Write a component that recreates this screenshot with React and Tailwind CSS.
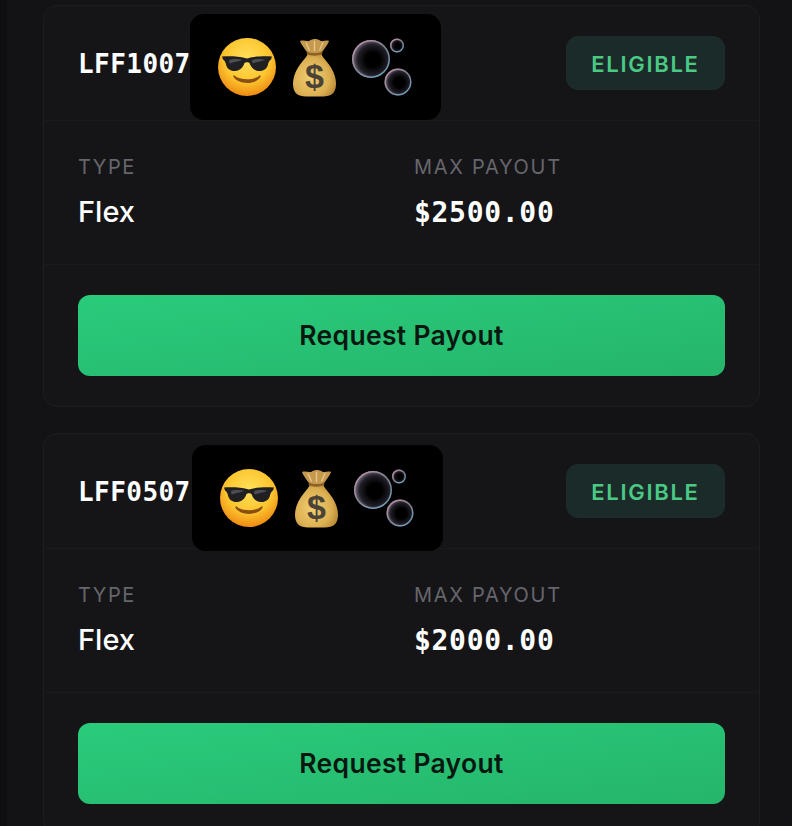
import { useId } from "react";

const MONO = "font-['DejaVu_Sans_Mono','Liberation_Mono',monospace]";

const payouts = [
  { code: "LFF1007", amount: "$2500.00", maskClass: "left-[146px] top-[8px]" },
  { code: "LFF0507", amount: "$2000.00", maskClass: "left-[148px] top-[11px]" },
];

function SunglassesFace() {
  const id = useId();
  return (
    <svg width="58" height="58" viewBox="0 0 58 58">
      <defs>
        <radialGradient id={id} cx="50%" cy="36%" r="64%">
          <stop offset="0%" stopColor="#ffe05a" />
          <stop offset="62%" stopColor="#fcc52f" />
          <stop offset="100%" stopColor="#ee8a12" />
        </radialGradient>
      </defs>
      <circle cx="29" cy="29" r="29" fill={`url(#${id})`} />
      <path d="M4 18.5 C12 18 22 18.4 27 20 C28.2 20.5 29.8 20.5 31 20 C36 18.4 46 18 54 18.5 L53 21.5 C51.5 22.5 50.5 24 50 26.5 C49 31 45.5 33.2 41 33 C36 32.8 33 29.5 31.5 25 C30.5 24 27.5 24 26.5 25 C25 29.5 22 32.8 17 33 C12.5 33.2 9 31 8 26.5 C7.5 24 6.5 22.5 5 21.5 Z" fill="#202022" />
      <path d="M11 22 C14 20.8 21 20.8 24 22 C21 23.4 14.5 24.4 11.5 25.6 Z" fill="#4d4e54" />
      <path d="M34 22 C37 20.8 44 20.8 47 22 C44 23.4 37.5 24.4 34.5 25.6 Z" fill="#4d4e54" />
      <path d="M16.5 37.5 C22 42.5 36 42.5 41.5 37.5 C42.4 37 43 37.8 42.5 38.8 C38 47 20 47 15.5 38.8 C15 37.8 15.6 37 16.5 37.5 Z" fill="#8a4f12" />
    </svg>
  );
}

function MoneyBag() {
  const id = useId();
  return (
    <svg width="43" height="59" viewBox="0 0 43 59">
      <defs>
        <radialGradient id={id} cx="42%" cy="58%" r="70%">
          <stop offset="0%" stopColor="#f0cf73" />
          <stop offset="60%" stopColor="#dcb052" />
          <stop offset="100%" stopColor="#a9772c" />
        </radialGradient>
      </defs>
      <path d="M15 13 C15 17 13 19 9 24 C3 31 0 39 0 46 C0 55 5 58.5 13 58.5 L30 58.5 C38 58.5 43 55 43 46 C43 39 40 31 34 24 C30 19 28 17 28 13 Z" fill={`url(#${id})`} />
      <path d="M7 3 C11 1.5 14 4 17 2.5 C20 0.5 24 0.5 27 2.5 C30 4 33 1.5 36 3 C35 6 32 10 29.5 13.5 C25 15.5 18 15.5 13.5 13.5 C11 10 8 6 7 3 Z" fill="#c59a4f" />
      <path d="M13 4.5 L16.5 12.5 M21.5 3 L21.5 13 M30 4.5 L26.5 12.5" stroke="#e6c98a" strokeWidth="1.3" fill="none" />
      <path d="M13.5 13.5 C18 15.5 25 15.5 29.5 13.5 L29 16.5 C25 18 18 18 14 16.5 Z" fill="#8a6126" />
      <text x="21.5" y="50" textAnchor="middle" fontFamily="Liberation Sans, sans-serif" fontWeight="700" fontSize="34" fill="#4c4336">$</text>
    </svg>
  );
}

function Bubble({ cx, cy, r }) {
  return (
    <g>
      <circle cx={cx} cy={cy} r={r} fill="url(#bubble-fill)" />
      <circle cx={cx} cy={cy} r={r - 0.8} fill="none" stroke="url(#bubble-rim)" strokeWidth="1.4" strokeOpacity="0.8" />
    </g>
  );
}

function Bubbles() {
  return (
    <svg width="60" height="58" viewBox="0 0 60 58">
      <defs>
        <radialGradient id="bubble-fill" cx="55%" cy="52%" r="56%">
          <stop offset="35%" stopColor="#000000" />
          <stop offset="72%" stopColor="#221f28" />
          <stop offset="100%" stopColor="#85808f" />
        </radialGradient>
        <linearGradient id="bubble-rim" x1="0.1" y1="0" x2="0.9" y2="1">
          <stop offset="0%" stopColor="#d79ab4" />
          <stop offset="50%" stopColor="#8d94a0" />
          <stop offset="100%" stopColor="#7cc4ea" />
        </linearGradient>
      </defs>
      <Bubble cx={19} cy={21} r={19} />
      <Bubble cx={45} cy={7.5} r={7} />
      <Bubble cx={46} cy={44} r={13.5} />
    </svg>
  );
}

function EmojiMask({ className }) {
  return (
    <div className={`absolute flex h-[106px] w-[251px] items-center rounded-[14px] bg-black pl-[28px] ${className}`}>
      <SunglassesFace />
      <div className="ml-[17px]">
        <MoneyBag />
      </div>
      <div className="ml-[16px]">
        <Bubbles />
      </div>
    </div>
  );
}

function PayoutCard({ item }) {
  return (
    <div className="rounded-[14px] border border-[#1d1d21] bg-[#151518]">
      <div className="relative flex h-[115px] items-center justify-between border-b border-[#1a1a1e] px-[34px]">
        <span className={`${MONO} pt-[2px] text-[26px] font-bold tracking-[0.45px] text-white`}>{item.code}</span>
        <EmojiMask className={item.maskClass} />
        <span className="flex h-[54px] w-[159px] items-center justify-center rounded-[12px] border border-[#1c2e2b] bg-[#1a2b29] pt-[2px] text-[22px] font-semibold tracking-[1.7px] text-[#4cc885]">
          ELIGIBLE
        </span>
      </div>

      <div className="grid h-[144px] grid-cols-2 gap-x-[25px] border-b border-[#1a1a1e] px-[34px] pt-[31px]">
        <div>
          <p className="text-[20px] leading-[30px] tracking-[1.5px] text-[#66666c]">TYPE</p>
          <p className="mt-[12px] text-[29px] font-medium leading-[36px] text-white">Flex</p>
        </div>
        <div>
          <p className="text-[20px] leading-[30px] tracking-[1.7px] text-[#66666c]">MAX PAYOUT</p>
          <p className={`${MONO} mt-[13px] text-[28px] font-bold leading-[36px] tracking-[0.7px] text-white`}>{item.amount}</p>
        </div>
      </div>

      <div className="px-[34px] py-[30px]">
        <button className="h-[81px] w-full rounded-[12px] bg-gradient-to-br from-[#2acb7c] to-[#25b56b] text-[26.5px] font-semibold tracking-[0.3px] text-[#0a1710]">
          Request Payout
        </button>
      </div>
    </div>
  );
}

export default function App() {
  return (
    <div className="h-[826px] w-[792px] overflow-hidden border-l-[7px] border-[#0e0e10] bg-[#131316] pl-[36px] pr-[32px] pt-[5px] font-['Inter',sans-serif]">
      <div className="flex flex-col gap-[26px]">
        {payouts.map((item) => (
          <PayoutCard key={item.code} item={item} />
        ))}
      </div>
    </div>
  );
}
